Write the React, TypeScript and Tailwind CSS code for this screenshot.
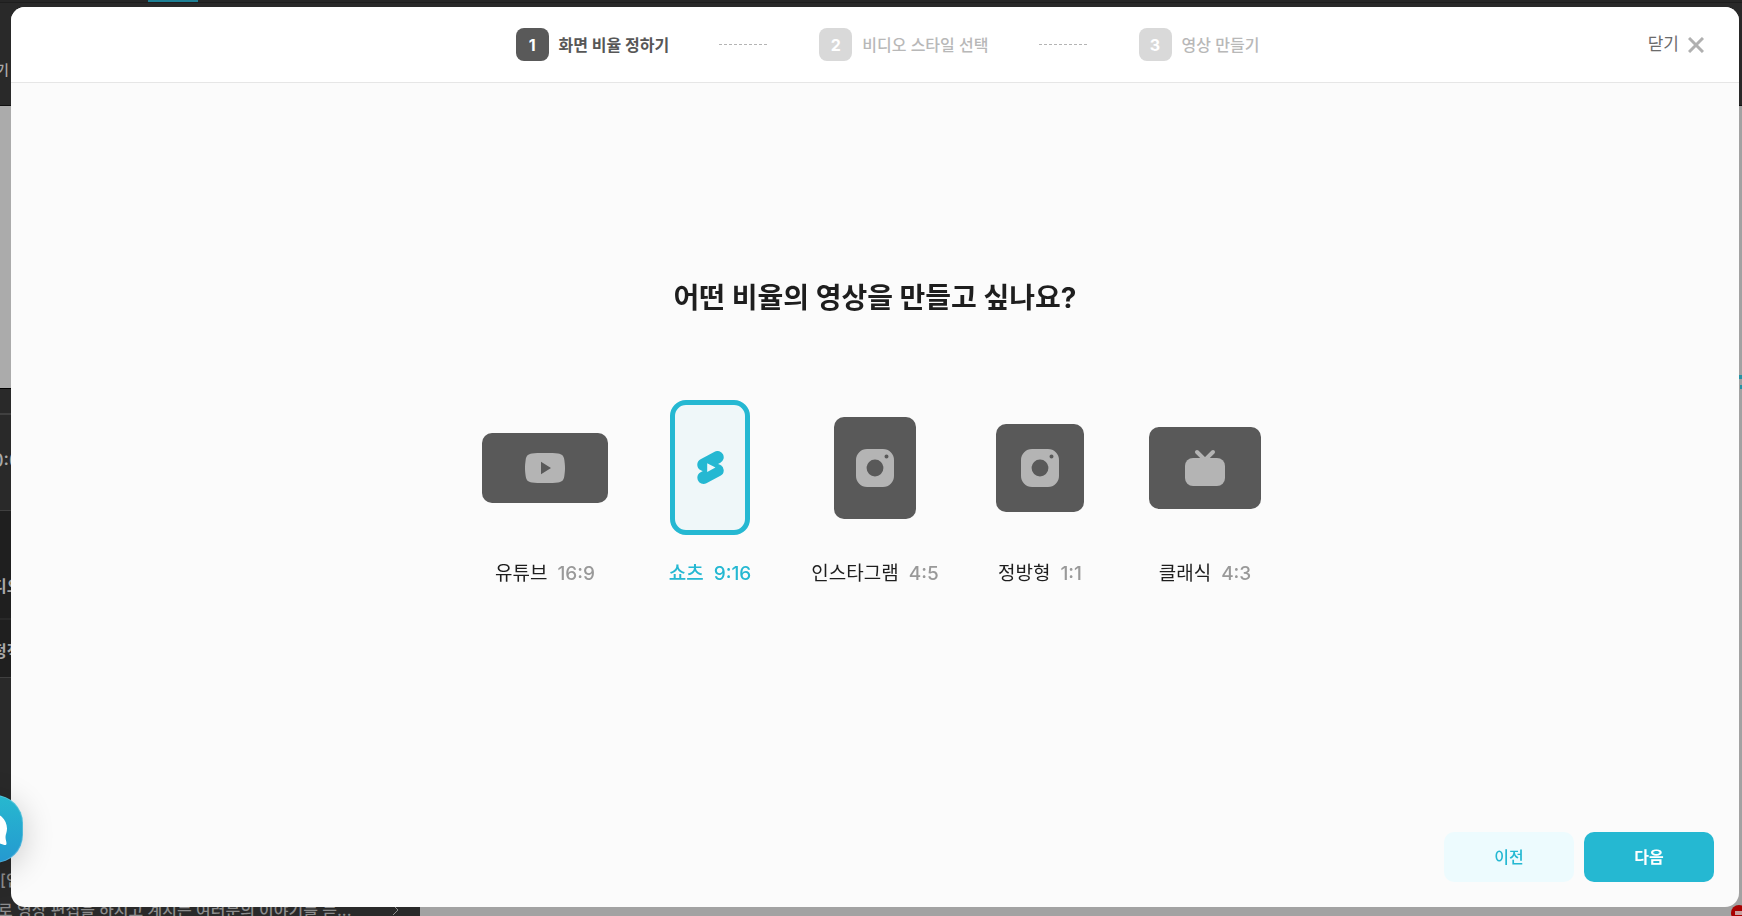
import { Fragment, useState } from 'react'
import type { ReactNode } from 'react'
import clsx from 'clsx'

interface IRatio {
  id: string
  name: string
  ratio: string
  frame: string
  icon: ReactNode
}

const YoutubeIcon = () => (
  <svg width="40" height="30" viewBox="0 0 40 30" fill="currentColor">
    <path
      fillRule="evenodd"
      d="M20 0c6 0 10 .1 13 .5 4 .5 5.800 2.300 6.300 6.200.5 4 .7 5.300.7 8.300s-.2 4.300-.7 8.300c-.5 3.900-2.300 5.700-6.300 6.200-3 .4-7 .5-13 .5s-10-.1-13-.5c-4-.5-5.800-2.300-6.300-6.200C.2 19.300 0 18 0 15s.2-4.300.7-8.300C1.200 2.800 3 1 7 .5 10 .1 14 0 20 0Zm-4 8.800v12.400L26 15Z"
    />
  </svg>
)

const ShortsIcon = () => (
  <svg width="33" height="33" viewBox="0 0 24 24" fill="currentColor">
    <path d="m18.931 9.99-1.441-.601 1.717-.913a4.48 4.48 0 0 0 1.874-6.078 4.506 4.506 0 0 0-6.09-1.874L4.792 5.929a4.504 4.504 0 0 0-2.402 4.193 4.521 4.521 0 0 0 2.666 3.904c.036.012 1.442.6 1.442.6l-1.706.901a4.51 4.51 0 0 0-2.369 3.967A4.528 4.528 0 0 0 6.93 24c.725 0 1.437-.174 2.08-.508l10.21-5.406a4.494 4.494 0 0 0 2.39-4.192 4.525 4.525 0 0 0-2.678-3.904ZM9.597 15.19V8.824l6.007 3.184z" />
  </svg>
)

const InstagramIcon = () => (
  <svg width="38" height="38" viewBox="0 0 38 38" fill="currentColor">
    <path
      fillRule="evenodd"
      d="M11 0h16a11 11 0 0 1 11 11v16a11 11 0 0 1-11 11H11A11 11 0 0 1 0 27V11A11 11 0 0 1 11 0Zm8 10.600a8.400 8.400 0 1 0 0 16.800 8.400 8.400 0 0 0 0-16.800ZM30.500 5.600a2 2 0 1 0 0 4 2 2 0 0 0 0-4Z"
    />
  </svg>
)

const TvIcon = () => (
  <svg width="40" height="37" viewBox="0 0 40 37" fill="currentColor">
    <rect y="9" width="40" height="28" rx="8" />
    <path
      d="M12 3l8 8 8-8"
      fill="none"
      stroke="currentColor"
      strokeWidth="4"
      strokeLinecap="round"
    />
  </svg>
)

const ratios: IRatio[] = [
  { id: 'youtube', name: '유튜브', ratio: '16:9', frame: 'w-[126px] h-[70px]', icon: <YoutubeIcon /> },
  { id: 'shorts', name: '쇼츠', ratio: '9:16', frame: 'w-[80px] h-[135px]', icon: <ShortsIcon /> },
  { id: 'instagram', name: '인스타그램', ratio: '4:5', frame: 'w-[82px] h-[102px]', icon: <InstagramIcon /> },
  { id: 'square', name: '정방형', ratio: '1:1', frame: 'w-[88px] h-[88px]', icon: <InstagramIcon /> },
  { id: 'classic', name: '클래식', ratio: '4:3', frame: 'w-[112px] h-[82px]', icon: <TvIcon /> }
]

const steps = ['화면 비율 정하기', '비디오 스타일 선택', '영상 만들기']

const StepBar = ({ current }: { current: number }) => (
  <ol className="flex items-center gap-[50px]">
    {steps.map((step, i) => (
      <Fragment key={step}>
        {i > 0 && (
          <li aria-hidden="true">
            <svg width="50" height="1" className="block">
              <path d="M0 .5h50" stroke="#b4b4b4" strokeDasharray="3 2" />
            </svg>
          </li>
        )}
        <li
          className={clsx(
            'flex items-center gap-[10px]',
            i === current ? 'text-[#575757] font-bold' : 'text-[#b8b8b8] font-medium'
          )}
        >
          <span
            className={clsx(
              'flex items-center justify-center w-[33px] h-[33px] rounded-lg font-bold text-white',
              i === current ? 'bg-[#595959]' : 'bg-[#d9d9d9]'
            )}
          >
            {i + 1}
          </span>
          {step}
        </li>
      </Fragment>
    ))}
  </ol>
)

const RatioOption = ({
  item,
  checked,
  onSelected
}: {
  item: IRatio
  checked: boolean
  onSelected: (id: string) => void
}) => (
  <label className="relative flex flex-col items-center gap-6 cursor-pointer">
    <input
      type="radio"
      name="ratio"
      className="sr-only"
      checked={checked}
      onChange={() => onSelected(item.id)}
    />
    <span className="flex items-center h-[135px]">
      <span
        className={clsx(
          'flex items-center justify-center',
          item.frame,
          checked
            ? 'rounded-2xl border-[5px] border-[#25b8d2] bg-[#eff7f9] text-[#25b8d2]'
            : 'rounded-[10px] bg-[#595959] text-[#b4b4b4]'
        )}
      >
        {item.icon}
      </span>
    </span>
    <span
      className={clsx(
        'flex items-center gap-[10px] h-[30px] text-[19px] whitespace-nowrap',
        checked ? 'text-[#25b8d2] font-medium' : 'text-[#1e1e1e]'
      )}
    >
      {item.name}
      <span className={clsx('font-medium', !checked && 'text-[#999]')}>
        {item.ratio}
      </span>
    </span>
  </label>
)

// Dimmed editor behind the dialog
const Editor = () => (
  <div
    aria-hidden="true"
    className="flex flex-col h-screen overflow-hidden bg-[#a2a2a2] text-base text-[#a8a8a8]"
  >
    <div className="flex h-[3px] shrink-0 border-b border-[#1e1e1e] bg-[#262626]">
      <span className="ml-[148px] w-[50px] bg-[#1d7f94]" />
    </div>
    <div className="flex items-center h-[103px] shrink-0 pt-8 bg-[#292929] border-b border-[#111] text-sm font-medium">
      <span className="-ml-1">기</span>
    </div>
    <div className="flex flex-1 min-h-0">
      <div className="flex flex-col w-[420px] bg-[#292929] whitespace-nowrap">
        <div className="h-[283px] shrink-0 bg-[#ababab] border-b border-black" />
        <div className="h-[26px] shrink-0 border-b-2 border-[#404040]" />
        <div className="flex items-center h-[96px] shrink-0 pb-1 border-b border-[#404040] text-lg font-medium">
          <span className="-ml-2">0:00</span>
        </div>
        <div className="flex items-end h-[109px] shrink-0 pb-5 border-b-2 border-[#292929] bg-[#1f1f1f] font-bold">
          <span className="-ml-2">디오</span>
        </div>
        <div className="flex items-center h-[58px] shrink-0 pt-1 border-b border-[#404040] bg-[#1f1f1f] font-bold">
          <span className="-ml-2">정적</span>
        </div>
        <div className="flex flex-col h-[250px] shrink-0 pt-[190px] text-[#8c8c8c]">
          <span className="font-medium">[인터뷰]</span>
          <div className="flex items-center justify-between pt-[6px] pr-5">
            <span className="-ml-[2px] font-medium">로 영상 편집을 하시고 계시는 여러분의 이야기를 듣...</span>
            <svg width="8" height="12" viewBox="0 0 8 12" fill="none" stroke="currentColor">
              <path d="M1 1l5 5-5 5" />
            </svg>
          </div>
        </div>
      </div>
      <div className="flex flex-1 flex-col items-end justify-between">
        <div className="flex flex-col items-end gap-[6px] pt-[269px]">
          <span className="w-[5px] h-1 bg-[#2593a5]" />
          <span className="w-[2px] h-1 bg-[#2593a5]" />
        </div>
        <span className="flex items-center justify-center w-4 h-4 -mr-[5px] -mb-[5px] rounded-full bg-[#a80000]">
          <span className="w-2 h-1 bg-[#c9a0a0]" />
        </span>
      </div>
    </div>
  </div>
)

const ChatButton = () => (
  <button
    type="button"
    aria-label="문의하기"
    className="fixed -left-[45px] bottom-[53px] flex items-center justify-center w-[68px] h-[68px] rounded-[28px] border border-white/20 bg-linear-to-b from-[#27b8cf] to-[#2599d0] shadow-[0_6px_32px_rgba(0,0,0,0.2)]"
  >
    <svg width="38" height="36" viewBox="0 0 38 36" fill="#fff">
      <path d="M19 1c10 0 18 7.400 18 16.500 0 3.500-1.500 6-1.500 8.500 0 2.800 1 4.500 1 6.500 0 1.500-1 1.800-2.200 1.500L27 31.500c-2.500 1-5 1.500-8 1.500C9 33 1 26.600 1 17.500S9 1 19 1Z" />
    </svg>
  </button>
)

const App = () => {
  const [selected, setSelected] = useState('shorts')

  return (
    <div className="relative font-[Inter,'Noto_Sans_CJK_KR',sans-serif]">
      <Editor />
      <div className="fixed inset-0 flex pt-[7px] pr-[3px] pb-[9px] pl-[11px]">
        <div
          role="dialog"
          aria-labelledby="ratio-title"
          className="flex flex-1 flex-col overflow-hidden rounded-[14px] bg-[#fbfbfb]"
        >
          <header className="grid grid-cols-[1fr_auto_1fr] items-center h-[76px] shrink-0 pr-[35px] pl-[60px] border-b border-[#e6e6e6] bg-white">
            <div />
            <StepBar current={0} />
            <button
              type="button"
              className="flex items-center justify-self-end gap-[9px] text-[17px] text-[#6b6b6b] cursor-pointer"
            >
              닫기
              <svg width="16" height="16" viewBox="0 0 16 16" fill="none">
                <path d="M1 1l14 14M15 1L1 15" stroke="#b0b0b0" strokeWidth="3" />
              </svg>
            </button>
          </header>
          <main className="flex flex-1 flex-col items-center justify-center pb-12">
            <h1 id="ratio-title" className="text-[28px] leading-10 font-bold text-[#1e1e1e]">
              어떤 비율의 영상을 만들고 싶나요?
            </h1>
            <div
              role="radiogroup"
              aria-labelledby="ratio-title"
              className="grid grid-cols-[repeat(5,165px)] mt-[82px]"
            >
              {ratios.map((item) => (
                <RatioOption
                  key={item.id}
                  item={item}
                  checked={item.id === selected}
                  onSelected={setSelected}
                />
              ))}
            </div>
          </main>
          <footer className="flex justify-end gap-[10px] px-[25px] pb-[25px]">
            <button
              type="button"
              className="w-[130px] h-[50px] rounded-[10px] bg-[#edfbfe] text-[#25b8d2] font-medium cursor-pointer"
            >
              이전
            </button>
            <button
              type="button"
              className="w-[130px] h-[50px] rounded-[10px] bg-[#25b8d2] text-white font-bold cursor-pointer"
            >
              다음
            </button>
          </footer>
        </div>
      </div>
      <ChatButton />
    </div>
  )
}

export default App
